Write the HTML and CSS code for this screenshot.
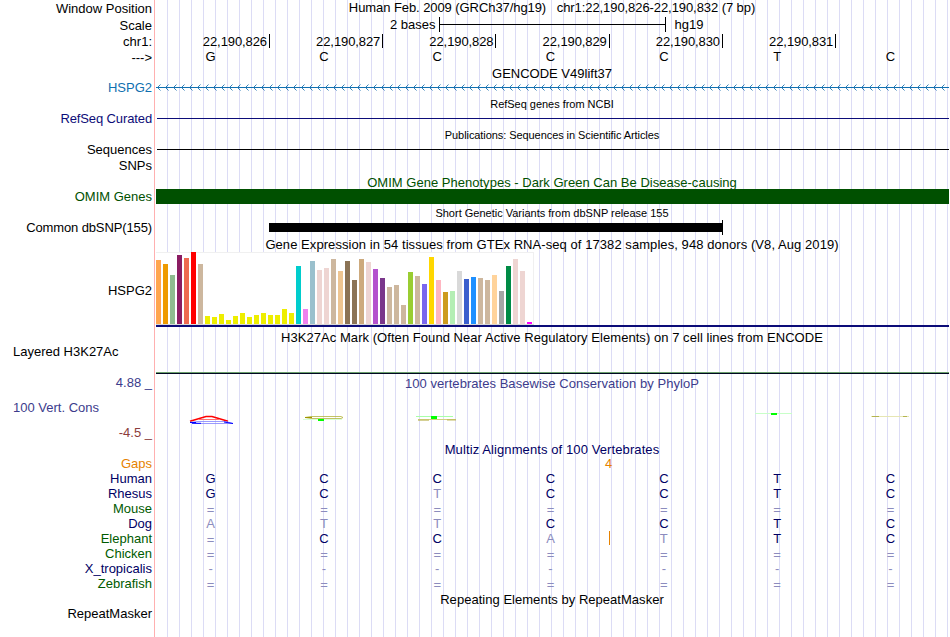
FILE: index.html
```html
<!DOCTYPE html>
<html lang="en">
<head>
<meta charset="utf-8">
<title>Genome Browser - HSPG2</title>
<link rel="stylesheet" href="styles.css">
</head>
<body>
<main class="browser">
  <section class="row h17"><div class="label down1">Window Position</div><div class="title pre">Human Feb. 2009 (GRCh37/hg19)   chr1:22,190,826-22,190,832 (7 bp)</div></section>
  <section class="row h17"><div class="label down1">Scale</div><div class="scale"><span>2 bases</span><i class="scale-bar"></i><span>hg19</span></div></section>
  <section class="row h15"><div class="label">chr1:</div><div class="ruler"><span>22,190,826</span><span>22,190,827</span><span>22,190,828</span><span>22,190,829</span><span>22,190,830</span><span>22,190,831</span></div></section>
  <section class="row h17"><div class="label down1">---&gt;</div><div class="bases plain"><b>G</b><b>C</b><b>C</b><b>C</b><b>C</b><b>T</b><b>C</b></div></section>

  <h2 class="title head h14" id="t-gencode">GENCODE V49lift37</h2>
  <section class="row h16"><div class="label gencode">HSPG2</div>
    <svg class="draw" width="796" height="16" viewBox="154 80 796 16"><defs><pattern id="chev" x="157" y="84" width="8" height="7" patternUnits="userSpaceOnUse"><path d="M3.5 0.5L0.5 3.5L3.5 6.5" fill="none" stroke="#1a72b0" stroke-width="0.9"/></pattern></defs><rect x="156" y="87" width="793" height="1" fill="#1070b0"/><rect x="157" y="84" width="792" height="7" fill="url(#chev)"/></svg></section>

  <h2 class="title head small h15 pad1" id="t-refseq">RefSeq genes from NCBI</h2>
  <section class="row h15"><div class="label refseq tight">RefSeq Curated</div><div class="line navy"></div></section>
  <h2 class="title head small h16 pad2" id="t-pubs">Publications: Sequences in Scientific Articles</h2>
  <section class="row h16"><div class="label">Sequences</div><div class="line"></div></section>
  <section class="row h15"><div class="label">SNPs</div></section>

  <h2 class="title head omim h16 pad2" id="t-omim">OMIM Gene Phenotypes - Dark Green Can Be Disease-causing</h2>
  <section class="row h15"><div class="label omim">OMIM Genes</div><div class="omim-bar"></div></section>

  <h2 class="title head small h16 pad2" id="t-snp">Short Genetic Variants from dbSNP release 155</h2>
  <section class="row h15"><div class="label tight">Common dbSNP(155)</div><div class="variant"><i></i></div></section>

  <h2 class="title head h17 pad2" id="t-gtex">Gene Expression in 54 tissues from GTEx RNA-seq of 17382 samples, 948 donors (V8, Aug 2019)</h2>
  <section class="row h75"><div class="label gtex-label">HSPG2</div>
    <div class="gtex"><div class="bars">
      <i style="height:64px;background:#ffa54f"></i><i style="height:60px;background:#ee9a00"></i><i style="height:49px;background:#8fbc8f"></i><i style="height:69px;background:#8b1c62"></i><i style="height:66px;background:#ee6a50"></i><i style="height:72px;background:#ff0000"></i><i style="height:60px;background:#cdb79e"></i>
      <i style="height:8px;background:#eeee00"></i><i style="height:7px;background:#eeee00"></i><i style="height:10px;background:#eeee00"></i><i style="height:4px;background:#eeee00"></i><i style="height:8px;background:#eeee00"></i><i style="height:11px;background:#eeee00"></i><i style="height:7px;background:#eeee00"></i><i style="height:9px;background:#eeee00"></i><i style="height:11px;background:#eeee00"></i><i style="height:9px;background:#eeee00"></i><i style="height:9px;background:#eeee00"></i><i style="height:15px;background:#eeee00"></i><i style="height:11px;background:#eeee00"></i>
      <i style="height:58px;background:#00cdcd"></i><i style="height:15px;background:#ee82ee"></i><i style="height:63px;background:#9ac0cd"></i><i style="height:54px;background:#eed5d2"></i><i style="height:56px;background:#eed5d2"></i><i style="height:65px;background:#cdb79e"></i><i style="height:53px;background:#eec591"></i><i style="height:63px;background:#8b7355"></i><i style="height:44px;background:#8b7355"></i><i style="height:65px;background:#cdaa7d"></i><i style="height:62px;background:#eed5d2"></i><i style="height:55px;background:#b452cd"></i><i style="height:46px;background:#7a378b"></i><i style="height:37px;background:#cdb79e"></i><i style="height:39px;background:#cdb79e"></i><i style="height:19px;background:#cdb79e"></i><i style="height:52px;background:#9acd32"></i><i style="height:48px;background:#cdb79e"></i><i style="height:40px;background:#7a67ee"></i><i style="height:67px;background:#ffd700"></i><i style="height:44px;background:#ffb6c1"></i><i style="height:32px;background:#cd9b1d"></i><i style="height:33px;background:#b4eeb4"></i><i style="height:53px;background:#d9d9d9"></i><i style="height:45px;background:#3a5fcd"></i><i style="height:47px;background:#1e90ff"></i><i style="height:46px;background:#cdb79e"></i><i style="height:44px;background:#cdb79e"></i><i style="height:49px;background:#ffd39b"></i><i style="height:33px;background:#a6a6a6"></i><i style="height:58px;background:#008b45"></i><i style="height:65px;background:#eed5d2"></i><i style="height:53px;background:#eed5d2"></i><i style="height:2px;background:#ff00ff"></i>
    </div></div></section>

  <h2 class="title head h17 pad3" id="t-h3k">H3K27Ac Mark (Often Found Near Active Regulatory Elements) on 7 cell lines from ENCODE</h2>
  <section class="row h31"><div class="label left">Layered H3K27Ac</div><div class="signal"></div></section>

  <section class="row h67"><div class="label cons"><span>4.88 _</span><span class="cons-name">100 Vert. Cons</span><span class="low">-4.5 _</span></div>
    <div class="cons-track"><h2 class="title cons" id="t-cons">100 vertebrates Basewise Conservation by PhyloP</h2>
    <svg class="draw" width="796" height="51" viewBox="154 391 796 51" fill="none">
      <path d="M190 421.3L206 416.5H212L228 421.3" stroke="#f00" stroke-width="1.6"/><path d="M199 419.5H219" stroke="#ff7070"/>
      <path d="M198 421.5H226L233 423.5H198L190 422.3Z" stroke="#8080ff" stroke-width=".8"/><path d="M190 422.5H196M224 422L233 423.5M192 423.3H201" stroke="#00f"/>
      <path d="M343 417.5L341 416.5H311L305 417.5L311 418.5H341Z" stroke="#b4b43c" stroke-width=".8"/><path d="M305 417.5H312" stroke="#a09600"/><path d="M303 419.5H342" stroke="#d8ffd8"/><path d="M318 420H324" stroke="#0f0" stroke-width="2"/>
      <path d="M416 416.5H453" stroke="#a8ffa8"/><path d="M431 417.5H437" stroke="#0f0" stroke-width="3"/><path d="M418 419.5H456" stroke="#d0d082"/><path d="M418 420.2H429M447 420H456" stroke="#b4aa3c" stroke-width=".8"/>
      <path d="M755 413.5H792" stroke="#c8ffc8"/><path d="M771 414H777" stroke="#0f0" stroke-width="2"/>
      <path d="M871 416.5H909" stroke="#e6e6b4"/><path d="M872 416.5H879M903 416.5H907" stroke="#b4b450"/>
    </svg></div></section>

  <h2 class="title head align h14" id="t-multiz">Multiz Alignments of 100 Vertebrates</h2>
  <section class="row h15 gap-row"><div class="label">Gaps</div><div class="gap-count">4</div></section>
  <section class="row h15 align"><div class="label">Human</div><div class="bases"><b>G</b><b>C</b><b>C</b><b>C</b><b>C</b><b>T</b><b>C</b></div></section>
  <section class="row h15 align"><div class="label">Rhesus</div><div class="bases"><b>G</b><b>C</b><s>T</s><b>C</b><b>C</b><b>T</b><b>C</b></div></section>
  <section class="row h15 align"><div class="label green">Mouse</div><div class="bases down1"><s>=</s><s>=</s><s>=</s><s>=</s><s>=</s><s>=</s><s>=</s></div></section>
  <section class="row h15 align"><div class="label">Dog</div><div class="bases"><s>A</s><s>T</s><s>T</s><b>C</b><b>C</b><b>T</b><b>C</b></div></section>
  <section class="row h15 align"><div class="label green">Elephant</div><div class="bases insert"><s class="down1">=</s><b>C</b><b>C</b><s>A</s><s>T</s><b>T</b><b>C</b></div></section>
  <section class="row h15 align"><div class="label green">Chicken</div><div class="bases down1"><s>=</s><s>=</s><s>=</s><s>=</s><s>=</s><s>=</s><s>=</s></div></section>
  <section class="row h15 align"><div class="label">X_tropicalis</div><div class="bases"><s>-</s><s>-</s><s>-</s><s>-</s><s>-</s><s>-</s><s>-</s></div></section>
  <section class="row h15 align"><div class="label green">Zebrafish</div><div class="bases down1"><s>=</s><s>=</s><s>=</s><s>=</s><s>=</s><s>=</s><s>=</s></div></section>

  <h2 class="title head h15 pad1" id="t-rmsk">Repeating Elements by RepeatMasker</h2>
  <section class="row h31"><div class="label">RepeatMasker</div></section>
</main>
</body>
</html>
```
FILE: styles.css
```css
* { box-sizing: border-box; }
body { margin: 0; background: #fff; color: #000; overflow: hidden; }
.browser {
  width: 950px; height: 637px;
  display: flex; flex-direction: column;
  font: 13px/15px "Liberation Sans", Arial, sans-serif;
  background:
    linear-gradient(#ffb0b0, #ffb0b0) 154px 0 / 1px 100% no-repeat,
    repeating-linear-gradient(to right, #dcdcf5 0 1px, transparent 1px 12px) 167px 0 / 783px 100% no-repeat;
}
.row { display: grid; grid-template-columns: 154px 796px; flex: none; }
.label { padding-right: 2px; text-align: right; white-space: nowrap; }
.label.left { text-align: left; padding-left: 13px; }
.label.tight { letter-spacing: -.12px; }
.title { margin: 0; font-size: 13px; font-weight: normal; text-align: center; white-space: nowrap; }
.title.pre { white-space: pre; letter-spacing: -.075px; }
.head { margin-left: 154px; flex: none; }
.head.small { font-size: 11px; }
#t-refseq { letter-spacing: -.03px; }
#t-pubs { letter-spacing: -.07px; }
#t-omim { letter-spacing: .02px; }
#t-gtex { letter-spacing: .066px; }
#t-h3k { letter-spacing: .05px; }
#t-cons { letter-spacing: .04px; }
#t-multiz { letter-spacing: .1px; }
#t-rmsk { letter-spacing: .03px; }
.down1 { padding-top: 1px; }
.pad1 { padding-top: 1px; }
.pad2 { padding-top: 2px; }
.pad3 { padding-top: 3px; }
.h14 { height: 14px; }
.h15 { height: 15px; }
.h16 { height: 16px; }
.h17 { height: 17px; }
.h31 { height: 31px; }
.h67 { height: 67px; }
.h75 { height: 75px; }
.draw { display: block; }

.scale { display: flex; padding-left: 236px; }
.scale-bar { width: 227px; height: 15px; margin: 0 9px 0 3px; border: solid #000; border-width: 0 1px; background: linear-gradient(#000, #000) 0 7px / 100% 1px no-repeat; }
.ruler { display: grid; grid-template-columns: repeat(6, 113.25px); padding-left: 2.7px; }
.ruler span { height: 14px; padding-right: 2px; border-right: 1px solid #000; text-align: right; letter-spacing: -.1px; }
.bases { display: grid; grid-template-columns: repeat(7, 113.3px); text-align: center; }
.bases b, .bases s { font-weight: normal; text-decoration: none; }
.bases s { color: #8c8cbe; }

.gencode { color: #1070b0; }
.refseq { color: #0c0c78; }
.omim { color: #005000; }
.line { margin: 7px 1px 0 3px; height: 1px; background: #000; }
.line.navy { background: #0c0c78; }
.omim-bar { margin: 0 1px 0 2px; background: #005000; }
.variant { margin-left: 115px; width: 454px; display: flex; align-items: center; border-right: 1px solid #000; }
.variant i { width: 453px; height: 9px; background: #000; }

.gtex-label { padding-top: 31px; }
.gtex { margin: 0 1px 0 2px; border-bottom: 2px solid #0c0c78; }
.bars { display: flex; align-items: flex-end; gap: 2px; width: 378px; height: 73px; background: #fff; border-bottom: 1px solid #d8d8d8; box-shadow: inset -1px 1px #f0f0f0; }
.bars i { width: 5px; flex: none; }

.signal { margin: 28px 1px 0 2px; height: 2px; background: #000820; border-top: 1px solid #6ca06c; }
.cons { color: #3c3c8c; }
.label.cons { display: flex; flex-direction: column; }
.cons-name { align-self: flex-start; margin: 10px 0 10px 13px; }
.low { color: #8c3c3c; }
.cons-track .title { padding-top: 1px; }

.align { color: #000064; }
.align .green { color: #005a00; }
.gap-row { color: #e68200; }
.gap-count { padding-left: 451px; }
.insert { background: linear-gradient(#e68200, #e68200) 455px 0 / 1px 14px no-repeat; }
```
